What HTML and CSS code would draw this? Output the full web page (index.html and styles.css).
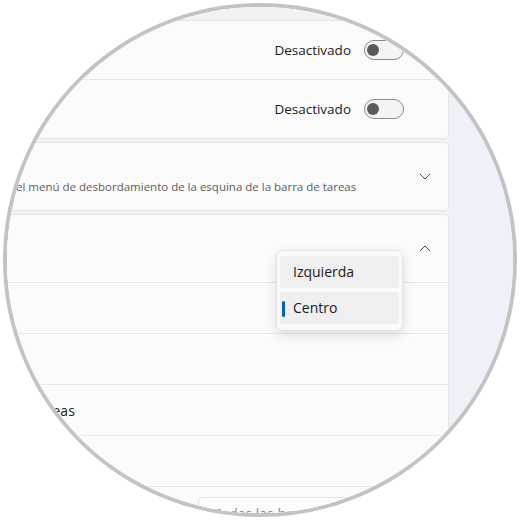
FILE: index.html
```html
<!DOCTYPE html>
<html lang="es">
<head>
  <meta charset="UTF-8" />
  <title>Barra de tareas</title>
  <link rel="stylesheet" href="styles.css">
</head>
<body>
  <div class="lens">
    <div class="window">
      <div class="settings">

        <div class="card">
          <div class="row row-toggle">
            <span></span>
            <div class="control">
              <span class="state">Desactivado</span>
              <span class="toggle"><span class="knob"></span></span>
            </div>
          </div>
          <div class="row row-toggle">
            <span></span>
            <div class="control">
              <span class="state">Desactivado</span>
              <span class="toggle"><span class="knob"></span></span>
            </div>
          </div>
        </div>

        <div class="card">
          <div class="row row-head">
            <span class="desc">el menú de desbordamiento de la esquina de la barra de tareas</span>
            <svg class="chevron" width="12" height="7" viewBox="0 0 12 7"><path d="M1 1 L6 6 L11 1" fill="none" stroke="#444" stroke-width="1"/></svg>
          </div>
        </div>

        <div class="card card-open">
          <div class="row row-head">
            <span></span>
            <svg class="chevron" width="12" height="7" viewBox="0 0 12 7"><path d="M1 6 L6 1 L11 6" fill="none" stroke="#444" stroke-width="1"/></svg>
          </div>
          <div class="row row-sub"></div>
          <div class="row row-sub"></div>
          <div class="row row-sub"><span class="label">tareas</span></div>
          <div class="row row-sub"></div>
          <div class="row row-last">
            <span></span>
            <div class="combo">Todas las barras de tareas</div>
          </div>

          <div class="menu">
            <div class="menu-item">Izquierda</div>
            <div class="menu-item selected">Centro</div>
          </div>
        </div>

      </div>
    </div>
  </div>
</body>
</html>
```

FILE: styles.css
```css
body {
  margin: 0;
  background: #fff;
  font-family: 'Open Sans', 'Noto Sans', sans-serif;
  color: #1b1b1b;
}
.lens {
  width: 514px;
  height: 514px;
  margin: 3px;
  box-sizing: border-box;
  border: 4px solid #c3c3c3;
  border-radius: 50%;
  overflow: hidden;
}
.window {
  height: 100%;
  background: #eef1f7;
}
.settings {
  width: 462px;
  margin-left: -20px;
  padding-top: 13px;
  display: flex;
  flex-direction: column;
  gap: 3px;
  background: #f1f2f5;
  min-height: 100%;
}
.card {
  position: relative;
  background: #fbfbfb;
  border: 1px solid #e6e6e8;
  border-radius: 4px;
}
.row {
  display: flex;
  align-items: center;
  justify-content: space-between;
  border-top: 1px solid #e8e8ea;
}
.row:first-child {
  border-top: none;
}
.row-toggle {
  height: 58px;
  padding-right: 44px;
}
.row-head {
  height: 67px;
  padding-right: 17px;
}
.row-sub {
  height: 50px;
}
.row-last {
  height: 50px;
  align-items: flex-start;
  padding-top: 10px;
  padding-right: 44px;
}
.control {
  display: flex;
  align-items: center;
  gap: 13px;
}
.state {
  font-size: 13.5px;
}
.toggle {
  display: flex;
  align-items: center;
  width: 36px;
  height: 18px;
  padding-left: 2px;
  border: 1px solid #8b8b8b;
  border-radius: 10px;
  background: #f4f4f4;
}
.knob {
  width: 12px;
  height: 12px;
  border-radius: 50%;
  background: #5a5a5a;
}
.desc {
  margin-left: 28px;
  margin-top: 20px;
  font-size: 11.5px;
  color: #5d5d5d;
}
.label {
  margin-left: 46px;
  font-size: 14px;
}
.combo {
  width: 190px;
  height: 32px;
  padding-left: 14px;
  line-height: 32px;
  font-size: 14px;
  color: #8a8a8a;
  background: #fdfdfd;
  border: 1px solid #e3e3e3;
  border-radius: 4px;
}
.menu {
  position: absolute;
  top: 35px;
  right: 45px;
  width: 119px;
  padding: 5px 3px 6px;
  display: flex;
  flex-direction: column;
  gap: 4px;
  background: #f9f9f9;
  border: 1px solid #e4e4e4;
  border-radius: 7px;
  box-shadow: 0 4px 12px rgba(0, 0, 0, 0.13);
}
.menu-item {
  position: relative;
  height: 32px;
  line-height: 32px;
  padding-left: 13px;
  font-size: 14px;
  background: #efefef;
  border-radius: 4px;
}
.menu-item.selected::before {
  content: '';
  position: absolute;
  left: 2px;
  top: 9px;
  width: 3px;
  height: 16px;
  border-radius: 2px;
  background: #0063b8;
}
```
